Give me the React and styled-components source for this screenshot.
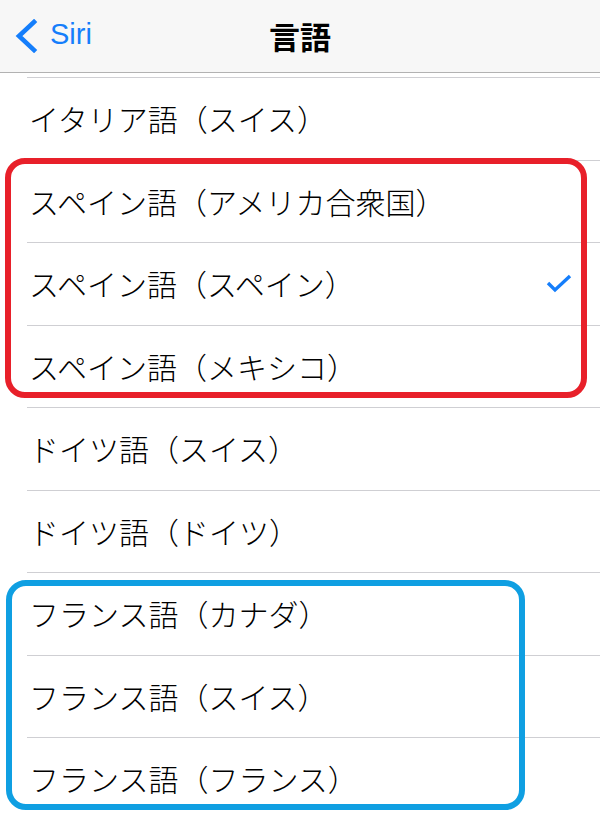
import React from 'react';
import styled, { createGlobalStyle } from 'styled-components';

const GlobalStyle = createGlobalStyle`
  html, body {
    margin: 0;
    padding: 0;
    background: #ffffff;
  }
  body {
    font-family: "Noto Sans CJK JP", "Noto Sans", sans-serif;
    -webkit-font-smoothing: antialiased;
  }
`;

const Screen = styled.div`
  width: 600px;
  height: 818px;
  overflow: hidden;
  background: #ffffff;
`;

const NavBar = styled.header`
  height: 72px;
  display: grid;
  grid-template-columns: 1fr auto 1fr;
  align-items: center;
  background: #f7f7f7;
  border-bottom: 1px solid #b2b2b2;
`;

const BackButton = styled.button`
  justify-self: start;
  display: flex;
  align-items: center;
  gap: 12px;
  padding: 0 0 0 14px;
  margin: 0;
  border: none;
  background: none;
  color: #157efb;
  font-family: "Liberation Sans", Arial, sans-serif;
  font-size: 29px;
  line-height: 1;
  cursor: pointer;
  height: 100%;

  span {
    transform: translateY(-2px);
  }
`;

const Title = styled.h1`
  margin: 0;
  font-family: "Noto Sans CJK JP", sans-serif;
  font-size: 31px;
  font-weight: 700;
  color: #000000;
  line-height: 1;
  transform: translateY(-1px);
`;

const List = styled.ul`
  position: relative;
  list-style: none;
  margin: 4px 0 0;
  padding: 0;
`;

const Row = styled.li`
  position: relative;
  height: 82.5px;
  box-sizing: border-box;
  display: flex;
  align-items: center;
  justify-content: space-between;
  padding: 0 28px 0 29px;
  font-size: 30px;
  font-weight: 300;
  color: #000000;
  line-height: 1;

  &::before {
    content: '';
    position: absolute;
    top: 0;
    left: 27px;
    right: 0;
    height: 1px;
    background: #cfcfd3;
  }
`;

const Highlight = styled.div`
  position: absolute;
  left: ${(p) => p.$left}px;
  top: ${(p) => p.$top}px;
  width: ${(p) => p.$width}px;
  height: ${(p) => p.$height}px;
  box-sizing: border-box;
  border: 6px solid ${(p) => p.$color};
  border-radius: 20px;
  pointer-events: none;
`;

const ChevronLeft = () => (
  <svg width="24" height="34" viewBox="0 0 24 34">
    <path
      d="M20 3 L5 17 L20 31"
      fill="none"
      stroke="#157efb"
      strokeWidth="4.6"
      strokeLinecap="square"
      strokeLinejoin="miter"
    />
  </svg>
);

const Check = () => (
  <svg width="26" height="20" viewBox="0 0 26 20">
    <path
      d="M2 10 L9 17 L24 3"
      fill="none"
      stroke="#157efb"
      strokeWidth="3.4"
      strokeLinecap="butt"
      strokeLinejoin="miter"
    />
  </svg>
);

const languages = [
  { label: 'イタリア語（スイス）' },
  { label: 'スペイン語（アメリカ合衆国）' },
  { label: 'スペイン語（スペイン）', selected: true },
  { label: 'スペイン語（メキシコ）' },
  { label: 'ドイツ語（スイス）' },
  { label: 'ドイツ語（ドイツ）' },
  { label: 'フランス語（カナダ）' },
  { label: 'フランス語（スイス）' },
  { label: 'フランス語（フランス）' },
];

const App = () => (
  <Screen>
    <GlobalStyle />
    <NavBar>
      <BackButton type="button">
        <ChevronLeft />
        <span>Siri</span>
      </BackButton>
      <Title>言語</Title>
      <div />
    </NavBar>
    <List>
      {languages.map((lang) => (
        <Row key={lang.label}>
          <span>{lang.label}</span>
          {lang.selected && <Check />}
        </Row>
      ))}
      <Highlight $color="#e8202a" $left={5} $top={81} $width={582} $height={240} />
      <Highlight $color="#0f9fe2" $left={6} $top={503} $width={519} $height={230} />
    </List>
  </Screen>
);

export default App;
